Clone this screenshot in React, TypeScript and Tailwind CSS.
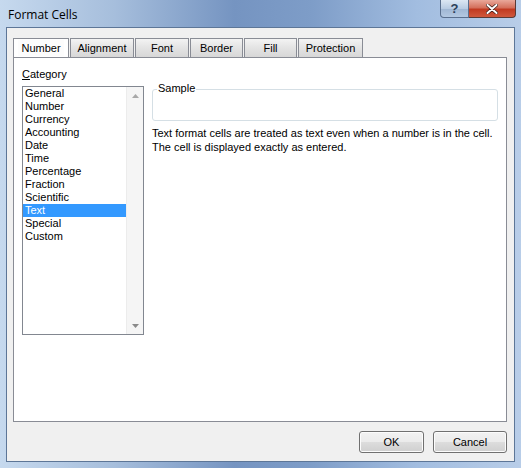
import React from 'react';

const categories = [
  'General',
  'Number',
  'Currency',
  'Accounting',
  'Date',
  'Time',
  'Percentage',
  'Fraction',
  'Scientific',
  'Text',
  'Special',
  'Custom',
];

const tabs = [
  { label: 'Number', w: 'w-[56px]' },
  { label: 'Alignment', w: 'w-[64px]' },
  { label: 'Font', w: 'w-[54px]' },
  { label: 'Border', w: 'w-[53px]' },
  { label: 'Fill', w: 'w-[53px]' },
  { label: 'Protection', w: 'w-[65px]' },
];

const Tab: React.FC<{ label: string; w: string; active?: boolean }> = ({ label, w, active }) => (
  <div
    className={`${w} h-[19px] mr-px flex items-center justify-center border border-b-0 border-[#898c95] ${
      active ? 'bg-white' : 'bg-[linear-gradient(#f3f3f3,#e3e3e3_50%,#d7d7d7)]'
    }`}
  >
    <span className={active ? 'px-[3px] bg-[#fcfcfc]' : ''}>{label}</span>
  </div>
);

const ScrollArrow: React.FC<{ down?: boolean }> = ({ down }) => (
  <div className="h-[17px] flex items-center justify-center">
    <svg width="7" height="4" viewBox="0 0 7 4">
      {down ? <path d="M0 0h7L3.5 4z" fill="#8a8a8a" /> : <path d="M0 4h7L3.5 0z" fill="#a8a8a8" />}
    </svg>
  </div>
);

const DialogButton: React.FC<{ label: string; w: string }> = ({ label, w }) => (
  <button
    className={`${w} h-[22px] rounded-[3px] border border-[#707070] bg-[linear-gradient(#f2f2f2,#ebebeb_50%,#dddddd_51%,#cfcfcf)] text-[11px] text-black shadow-[inset_0_0_0_1px_#fcfcfc]`}
  >
    {label}
  </button>
);

const App: React.FC = () => {
  return (
    <div
      className="w-[521px] h-[468px] flex flex-col bg-[linear-gradient(90deg,#c6d9ee_0%,#a6bedc_22%,#7594c1_45%,#7e9dc8_60%,#a2bde0_80%,#b8cde8_100%)] text-black"
      style={{ fontFamily: '"Liberation Sans", Arial, sans-serif' }}
    >
      {/* Title bar */}
      <div className="h-[27px] flex items-start pl-[8px] pr-[5px]">
        <span className="mt-[6px] text-[12px] text-black" style={{ fontFamily: '"Open Sans", "Liberation Sans", sans-serif' }}>
          Format Cells
        </span>
        <div className="ml-auto flex">
          <div className="w-[29px] h-[18px] rounded-bl-[4px] border border-t-0 border-[#5a6f8e] bg-[linear-gradient(#dce7f3,#b9cce3_50%,#9fb6d3_51%,#b3c8e2)] flex items-center justify-center">
            <span className="text-[13px] font-bold leading-none text-[#2d3f5a]">?</span>
          </div>
          <div className="w-[47px] h-[18px] rounded-br-[4px] border border-t-0 border-l-0 border-[#5a3a36] bg-[linear-gradient(#e9a89a,#d4705c_45%,#c13a21_55%,#d0583c)] flex items-center justify-center">
            <svg width="12" height="10" viewBox="0 0 12 10">
              <path d="M1.5 1l9 8M10.5 1l-9 8" stroke="#3b1a16" strokeWidth="3.4" strokeLinecap="round" />
              <path d="M1.5 1l9 8M10.5 1l-9 8" stroke="#ffffff" strokeWidth="2" strokeLinecap="round" />
            </svg>
          </div>
        </div>
      </div>

      {/* Client area */}
      <div className="mx-[6px] h-[435px] border border-[#5d7697] bg-[#f0f0f0] pl-[6px] pr-[7px] pt-[10px] flex flex-col text-[11px]">
        <div className="flex">
          {tabs.map((t, i) => (
            <Tab key={t.label} label={t.label} w={t.w} active={i === 0} />
          ))}
        </div>

        <div className="h-[365px] border border-[#898c95] bg-white flex pl-[8px] pt-[10px]">
          <div className="w-[122px] flex flex-col">
            <div className="h-[18px] leading-[13px]">
              <span className="underline">C</span>ategory
            </div>
            <div className="h-[249px] border border-[#828790] flex">
              <div className="flex-1 flex flex-col">
                {categories.map((c) => (
                  <div
                    key={c}
                    className={`h-[13px] leading-[13px] pl-[2px] ${c === 'Text' ? 'bg-[#3399ff] text-white' : ''}`}
                  >
                    {c}
                  </div>
                ))}
              </div>
              <div className="w-[17px] bg-[#f5f5f5] border-l border-[#ececec] flex flex-col justify-between">
                <ScrollArrow />
                <ScrollArrow down />
              </div>
            </div>
          </div>

          <div className="ml-[8px] w-[346px] flex flex-col">
            <div className="relative mt-[21px] h-[32px] rounded-[3px] border border-[#d5dfe5]">
              <span className="absolute -top-[8px] left-[4px] bg-white px-[1px] leading-[13px]">Sample</span>
            </div>
            <p className="mt-[5px] leading-[14px]">
              Text format cells are treated as text even when a number is in the cell.
              <br />
              The cell is displayed exactly as entered.
            </p>
          </div>
        </div>

        <div className="flex justify-end gap-[9px] mt-[9px]">
          <DialogButton label="OK" w="w-[65px]" />
          <DialogButton label="Cancel" w="w-[74px]" />
        </div>
      </div>
    </div>
  );
};

export default App;
